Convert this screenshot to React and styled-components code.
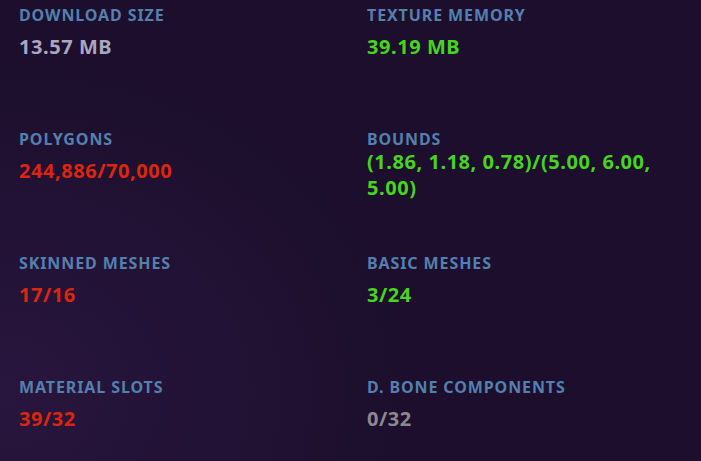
import React from 'react'
import styled, { createGlobalStyle } from 'styled-components'

const GlobalStyle = createGlobalStyle`
  html, body {
    margin: 0;
    padding: 0;
    background: #1c0e2c;
  }
`

const Page = styled.div`
  width: 701px;
  height: 461px;
  overflow: hidden;
  box-sizing: border-box;
  padding: 5px 0 0 19px;
  font-family: 'Noto Sans', 'Open Sans', sans-serif;
  background:
    radial-gradient(ellipse 420px 340px at 0% 85%, rgba(46, 25, 70, 0.7) 0%, rgba(28, 14, 44, 0) 100%),
    #1c0e2c;
`

const Grid = styled.div`
  display: grid;
  grid-template-columns: 348px 1fr;
  grid-auto-rows: 124px;
`

const Cell = styled.div`
  display: flex;
  flex-direction: column;
`

const Label = styled.div`
  color: #5380ae;
  font-size: 16px;
  line-height: 20px;
  font-weight: 700;
  letter-spacing: 0.9px;
  text-transform: uppercase;
`

const ValueBox = styled.div`
  min-height: 43px;
  display: flex;
  align-items: center;
  padding-right: 16px;
`

const tones = {
  neutral: '#aaa7bf',
  bad: '#da260f',
  good: '#45d51e',
  muted: '#8b8893',
}

const Value = styled.div`
  color: ${(p) => tones[p.$tone]};
  font-size: 20px;
  line-height: 26px;
  font-weight: 700;
  letter-spacing: 0.55px;
`

const stats = [
  { label: 'Download Size', value: '13.57 MB', tone: 'neutral' },
  { label: 'Texture Memory', value: '39.19 MB', tone: 'good' },
  { label: 'Polygons', value: '244,886/70,000', tone: 'bad' },
  { label: 'Bounds', value: '(1.86, 1.18, 0.78)/(5.00, 6.00, 5.00)', tone: 'good' },
  { label: 'Skinned Meshes', value: '17/16', tone: 'bad' },
  { label: 'Basic Meshes', value: '3/24', tone: 'good' },
  { label: 'Material Slots', value: '39/32', tone: 'bad' },
  { label: 'D. Bone Components', value: '0/32', tone: 'muted' },
]

export default function App() {
  return (
    <>
      <GlobalStyle />
      <Page>
        <Grid>
          {stats.map((s) => (
            <Cell key={s.label}>
              <Label>{s.label}</Label>
              <ValueBox>
                <Value $tone={s.tone}>{s.value}</Value>
              </ValueBox>
            </Cell>
          ))}
        </Grid>
      </Page>
    </>
  )
}
